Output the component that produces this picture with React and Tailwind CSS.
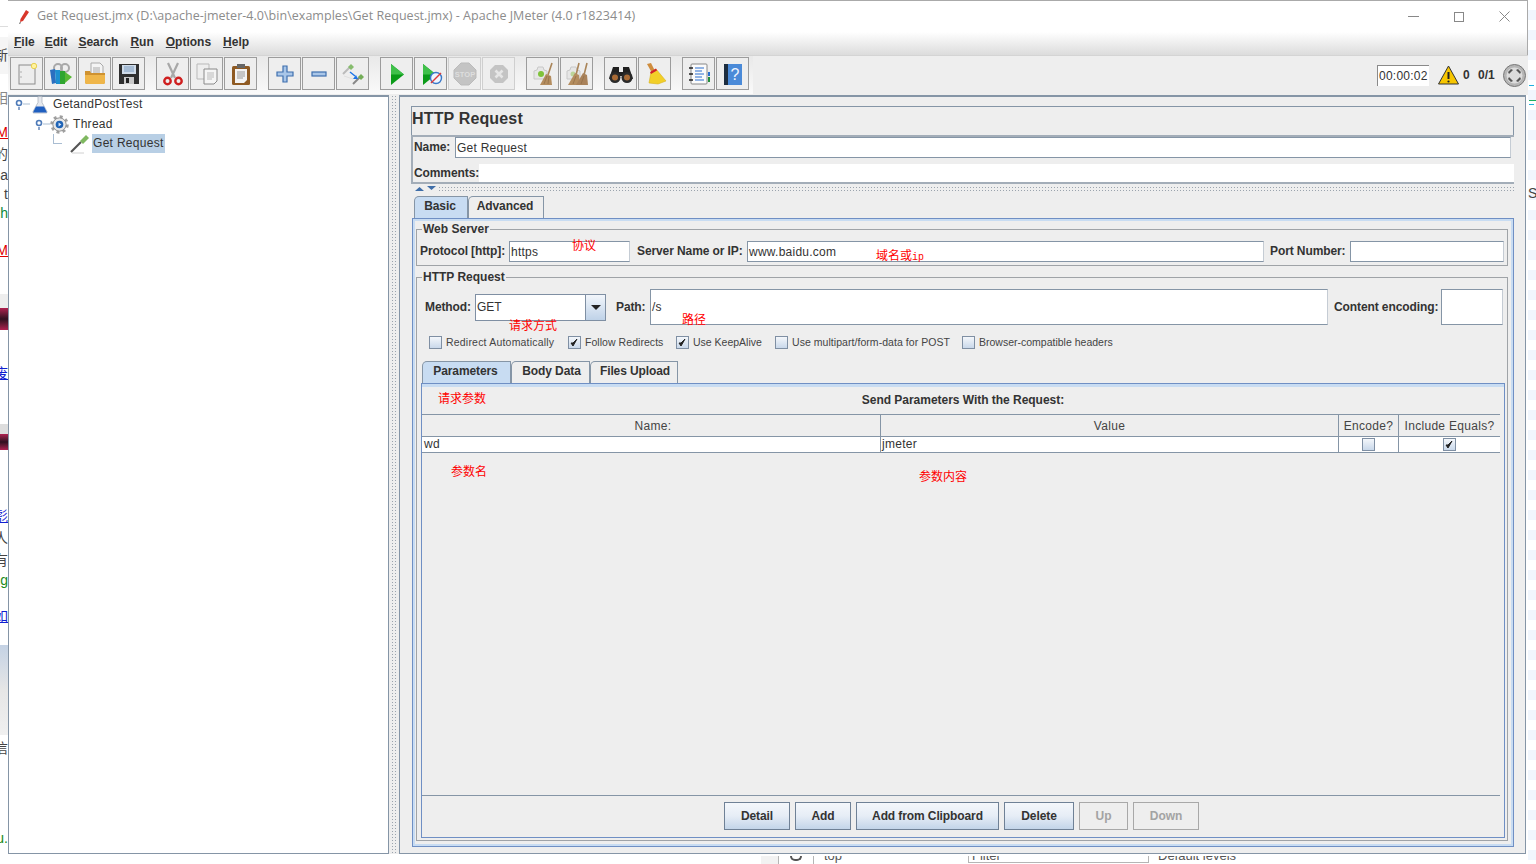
import React from "react";

const LINE = "border-[#8595a6]";

const Sheet = () => (
  <>
    <rect x="4" y="3" width="16" height="19" fill="#ededed" stroke="#8c8c8c" />
    <circle cx="6" cy="10" r=".7" fill="#999" />
    <circle cx="6" cy="15" r=".7" fill="#999" />
    <circle cx="19" cy="4" r="2.700" fill="#fff3a0" stroke="#e8d050" />
  </>
);
const Templates = () => (
  <>
    <circle cx="9" cy="6" r="4" fill="none" stroke="#a8a8a8" strokeWidth="2" />
    <circle cx="16" cy="6" r="4" fill="none" stroke="#a8a8a8" strokeWidth="2" />
    <path d="M1 8l5-1 1 14-4 1z" fill="#2b6fc0" />
    <path d="M6 8h5v14H7z" fill="#1d8fd0" />
    <path d="M11 9h5v13h-5z" fill="#2fa52f" />
    <path d="M16 10l7 5-7 6z" fill="#58b834" />
  </>
);
const Folder = () => (
  <>
    <path d="M8 1h9l3 3v10H8z" fill="#f4f4f4" stroke="#aaa" />
    <path d="M10 6h7M10 8h7M10 10h7" stroke="#aaa" />
    <path d="M2 9h5l1 2h14v9a2 2 0 0 1-2 2H4a2 2 0 0 1-2-2z" fill="#cf9230" />
    <path d="M2 13h20v7a2 2 0 0 1-2 2H4a2 2 0 0 1-2-2z" fill="#efb64a" />
  </>
);
const Floppy = () => (
  <>
    <path d="M2 2h20v20H2z" fill="#2f2f2f" />
    <path d="M5 3h14v9H5z" fill="#cfdbe8" />
    <path d="M7 5h10M7 7h10M7 9h10" stroke="#7d9cc0" />
    <path d="M7 15h10v7H7z" fill="#c9c9c9" />
    <path d="M9 16h3v5H9z" fill="#222" />
  </>
);
const Scissors = () => (
  <>
    <path d="M7 1l7 15M17 1l-7 15" stroke="#a8a8a8" strokeWidth="2.200" />
    <circle cx="6.500" cy="19" r="3.200" fill="none" stroke="#cf1f1f" strokeWidth="2.400" />
    <circle cx="17.500" cy="19" r="3.200" fill="none" stroke="#cf1f1f" strokeWidth="2.400" />
  </>
);
const CopyIcon = () => (
  <>
    <path d="M2 2h12v15H2z" fill="#eee" stroke="#b9b9b9" />
    <path d="M9 7h13v12l-3 3H9z" fill="#f5f5f5" stroke="#8a8a8a" />
    <path d="M12 11h7M12 13h7M12 15h7M12 17h5" stroke="#bbb" />
  </>
);
const Paste = () => (
  <>
    <rect x="3" y="4" width="18" height="19" rx="1.500" fill="#8f5a22" />
    <path d="M6 7h12v11l-3 3H6z" fill="#f3f3f3" />
    <path d="M8 10h8M8 12h8M8 14h8M8 16h6" stroke="#999" />
    <path d="M8 2h8v4H8z" fill="#666" />
  </>
);
const Plus = () => <path d="M10 4h4v6h6v4h-6v6h-4v-6H4v-4h6z" fill="#a9c6e8" stroke="#3e6fae" strokeWidth="1.200" />;
const Minus = () => <rect x="5" y="10" width="14" height="4" fill="#a9c6e8" stroke="#3e6fae" strokeWidth="1.200" />;
const Toggle = () => (
  <>
    <path d="M2 12l7-7" stroke="#bbb" strokeWidth="2" />
    <path d="M7 5l3-3 3 3-3 3z" fill="#86bc6d" />
    <path d="M12 22l7-7" stroke="#888" strokeWidth="2" />
    <path d="M17 15l3-3 3 3-3 3z" fill="#74ad58" />
    <path d="M9 10l5 4" stroke="#1d74e8" strokeWidth="1.500" />
    <path d="M17 17l-5 0 3-4z" fill="#1d74e8" />
    <path d="M3 14l9 3" stroke="#e0e0e0" />
  </>
);
const Play = () => (
  <>
    <path d="M6 2l13 10.500L6 23z" fill="#0a9a18" />
    <path d="M6 2l13 10.500H6z" fill="#3fc04a" />
  </>
);
const PlayNoPause = () => (
  <>
    <path d="M4 2l13 10.500L4 23z" fill="#0a9a18" />
    <path d="M4 2l13 10.500H4z" fill="#3fc04a" />
    <circle cx="17" cy="16" r="5.500" fill="#eef5ff" stroke="#3a78c8" strokeWidth="1.400" />
    <path d="M12 21l10-10" stroke="#dd3a3a" strokeWidth="1.400" />
  </>
);
const Stop = () => (
  <>
    <path d="M8 1h8l7 7v8l-7 7H8l-7-7V8z" fill="#c4c4c4" stroke="#bbb" />
    <text x="12" y="15" textAnchor="middle" fontSize="7.500" fontWeight="700" fill="#dedede" fontFamily="Liberation Sans">STOP</text>
  </>
);
const Shutdown = () => (
  <>
    <path d="M8 3h8l5 5v8l-5 5H8l-5-5V8z" fill="#c4c4c4" />
    <path d="M8.500 8.500l7 7M15.500 8.500l-7 7" stroke="#e6e6e6" strokeWidth="2.600" />
  </>
);
const Clear = () => (
  <>
    <path d="M3 9l3-1 1-3h5l1 3 3 1v8H3z" fill="#e6e6e6" stroke="#c8c8c8" />
    <circle cx="10" cy="12" r="3" fill="#7fc33a" />
    <path d="M21 1l-4 12" stroke="#a98458" strokeWidth="1.600" />
    <path d="M15 12l5 2 1 9H9z" fill="#b48d5f" />
    <path d="M13 22l3-8M17 22l1-8" stroke="#8e6c45" strokeWidth=".7" />
  </>
);
const ClearAll = () => (
  <>
    <path d="M2 9l3-1 1-3h5l1 3 3 1v8H2z" fill="#e6e6e6" stroke="#c8c8c8" />
    <circle cx="8" cy="12" r="2.500" fill="#bcd59a" />
    <path d="M14 1l-3 12M22 1l-3 12" stroke="#a98458" strokeWidth="1.600" />
    <path d="M10 11l4 2 1 10H3z" fill="#b48d5f" />
    <path d="M18 11l4 2 1 10H11z" fill="#a9825a" />
    <path d="M8 22l3-8M16 22l3-8" stroke="#8e6c45" strokeWidth=".7" />
  </>
);
const Binoculars = () => (
  <>
    <path d="M4 5h6v5h4V5h6l4 12H14v-3h-4v3H0z" fill="#1f1f1f" />
    <circle cx="6" cy="15.500" r="5.500" fill="#2a2a2a" />
    <circle cx="18" cy="15.500" r="5.500" fill="#2a2a2a" />
    <circle cx="6" cy="15.500" r="3" fill="#a86a35" />
    <circle cx="18" cy="15.500" r="3" fill="#a86a35" />
  </>
);
const Broom = () => (
  <>
    <path d="M4 2l4-1 4 8-3 2z" fill="#cf8d3e" />
    <path d="M8 10l5-3 10 12-8 3-9-1z" fill="#f2cf28" stroke="#d9b11c" strokeWidth=".6" />
    <path d="M7 10l6-3.500 1 2-6 3.500z" fill="#d0202a" />
  </>
);
const Notebook = () => (
  <>
    <rect x="4" y="2" width="16" height="20" rx="1" fill="#fbfbfb" stroke="#888" />
    <path d="M8 6h9M8 9h7M8 12h9M8 15h7M8 18h9" stroke="#2a6fd0" strokeWidth="1.200" />
    <path d="M2 6h4M2 12h4M2 18h4" stroke="#222" strokeWidth="1.600" />
    <path d="M21 10h2v4h-2z" fill="#2a6fd0" />
    <path d="M21 15h2v5h-2z" fill="#22903a" />
  </>
);
const HelpBook = () => (
  <>
    <path d="M3 2h5v21H3z" fill="#1d2d40" />
    <path d="M7 2h14v21H7z" fill="#4a8ad8" />
    <text x="14" y="18" textAnchor="middle" fontSize="16" fill="#eef4ff" fontFamily="Liberation Sans">?</text>
  </>
);

const toolbar = [
  [[Sheet], [Templates], [Folder], [Floppy]],
  [[Scissors], [CopyIcon], [Paste]],
  [[Plus], [Minus], [Toggle]],
  [[Play], [PlayNoPause], [Stop, true], [Shutdown, true]],
  [[Clear], [ClearAll]],
  [[Binoculars], [Broom]],
  [[Notebook], [HelpBook]],
];

const ToolBtn = ({ Icon, off }) => (
  <div className={`flex h-[33px] w-[33px] items-center justify-center border bg-[#eeeeee] ${off ? "border-[#cfcfcf]" : "border-[#9c9c9c]"}`}>
    <svg width="24" height="24" viewBox="0 0 24 24">
      <Icon />
    </svg>
  </div>
);

const Mnemonic = ({ first, rest, className }) => (
  <span className={className}>
    <span className="underline">{first}</span>
    {rest}
  </span>
);

const Handle = () => (
  <svg width="16" height="12" viewBox="0 0 16 12" className="shrink-0">
    <path d="M9 6h7" stroke="#a9bdd2" />
    <path d="M5 9v3" stroke="#5b7fb5" strokeWidth="1.400" />
    <circle cx="5" cy="5" r="2.500" fill="#fff" stroke="#4f7bb8" strokeWidth="1.600" />
  </svg>
);

const Flask = () => (
  <svg width="16" height="19" viewBox="0 0 16 18" className="shrink-0">
    <path d="M6 1h4v6l5 9a1 1 0 0 1-1 1.500H2A1 1 0 0 1 1 16l5-9z" fill="#e6e9ee" stroke="#a5adb8" strokeWidth=".7" />
    <path d="M4 11h8l3 6H1z" fill="#1f5fc0" />
  </svg>
);

const Gear = () => (
  <svg width="19" height="19" viewBox="0 0 20 20" className="shrink-0">
    <circle cx="10" cy="10" r="8" fill="none" stroke="#a0a0a0" strokeWidth="3.500" strokeDasharray="3 3.280" />
    <circle cx="10" cy="10" r="7" fill="#e8e8e8" stroke="#8d8d8d" />
    <circle cx="10" cy="10" r="4" fill="#1f63b5" />
    <path d="M9 8l3 2-3 2z" fill="#d6e6fa" />
  </svg>
);

const Dropper = () => (
  <svg width="20" height="20" viewBox="0 0 20 20" className="shrink-0">
    <path d="M1 18l10-10" stroke="#555" strokeWidth="2.200" />
    <path d="M10 7l6-6 3 3-6 6z" fill="#7fb860" />
    <path d="M2 19h12" stroke="#d0d0d0" />
  </svg>
);

const Label = ({ className, children }) => <span className={`shrink-0 whitespace-nowrap text-[12px] font-bold leading-[15px] tracking-[-0.1px] text-[#333333] ${className}`}>{children}</span>;

const Field = ({ className, children }) => (
  <div className={`flex items-center overflow-hidden border-y border-l border-y-[#8595a6] border-l-[#8595a6] border-r border-r-[#c5ccd4] bg-white pl-[1px] text-[12px] tracking-[0.25px] text-[#333333] ${className}`}>
    {children}
  </div>
);

const Box = ({ checked }) => (
  <div className="flex h-[13px] w-[13px] shrink-0 items-center justify-center border border-[#7f8fa3] bg-gradient-to-b from-[#f4f7fb] to-[#c9d8ea]">
    {checked && (
      <svg width="9" height="9" viewBox="0 0 9 9">
        <path d="M1 5l2 3 4-7-4 4z" fill="#222" stroke="#222" />
      </svg>
    )}
  </div>
);

const Check = ({ text, checked, className, textClass }) => (
  <div className={`flex items-center gap-[4px] ${className}`}>
    <Box checked={checked} />
    <span className={`whitespace-nowrap text-[10.500px] text-[#444444] ${textClass}`}>{text}</span>
  </div>
);

const Tab = ({ active, className, children }) => (
  <div
    className={`flex items-center justify-center rounded-tl-[5px] border-x border-t border-[#8595a6] text-[12px] font-bold tracking-[-0.1px] text-[#333333] ${
      active ? "bg-[#c8dcf2]" : "bg-[#eeeeee]"
    } ${className}`}
  >
    {children}
  </div>
);

const Fieldset = ({ title, className, children }) => (
  <div className={`relative border border-[#9fa3a7] ${className}`}>
    <span className="absolute left-[5px] top-[-8px] bg-[#eeeeee] px-[1px] text-[12px] font-bold leading-[15px] text-[#333333]">{title}</span>
    {children}
  </div>
);

const Btn = ({ off, className, children }) => (
  <div
    className={`flex h-[28px] items-center justify-center border text-[12px] font-bold tracking-[-0.1px] ${
      off ? "border-[#a8a8a8] bg-[#eeeeee] text-[#a3a3a3]" : "border-[#6f8196] bg-gradient-to-b from-[#f4f7fb] via-[#e6edf6] to-[#c3d5e9] text-[#333333]"
    } ${className}`}
  >
    {children}
  </div>
);

const Note = ({ className, children }) => <span className={`absolute whitespace-nowrap text-[12px] leading-[14px] text-[#ff0000] ${className}`}>{children}</span>;

const Scrap = ({ className, children }) => <span className={`absolute whitespace-nowrap text-[14px] leading-[16px] ${className}`}>{children}</span>;

export default function App() {
  return (
    <div className="relative flex h-[864px] w-[1536px] overflow-hidden bg-white font-['Liberation_Sans','Noto_Sans_CJK_SC',sans-serif]">
      {/* page behind the window, left edge */}
      <div className="relative w-[8px] shrink-0 overflow-hidden">
        <div className="absolute left-0 top-[26px] h-px w-[8px] bg-[#dddddd]" />
        <div className="absolute left-0 top-[37px] h-[37px] w-[8px] bg-[#f5f5f5]" />
        <Scrap className="right-0 top-[47px] text-[#444]">新</Scrap>
        <Scrap className="right-0 top-[90px] text-[#888]">相</Scrap>
        <Scrap className="right-0 top-[124px] text-[#e00000] underline">M</Scrap>
        <Scrap className="right-0 top-[146px] text-[#444]">的</Scrap>
        <Scrap className="right-0 top-[167px] text-[#444]">oa</Scrap>
        <Scrap className="right-0 top-[186px] text-[#444]">t</Scrap>
        <Scrap className="right-0 top-[205px] text-[#0a8a3a]">h</Scrap>
        <Scrap className="right-0 top-[242px] text-[#e00000] underline">M</Scrap>
        <div className="absolute left-0 top-[294px] h-[14px] w-[8px] bg-[#eeeeee]" />
        <div className="absolute left-0 top-[308px] h-[22px] w-[8px] bg-gradient-to-b from-[#b02050] via-[#301020] to-[#b02050]" />
        <Scrap className="right-0 top-[365px] text-[#1020d0] underline">废</Scrap>
        <div className="absolute left-0 top-[424px] h-[10px] w-[8px] bg-[#dddddd]" />
        <div className="absolute left-0 top-[434px] h-[16px] w-[8px] bg-gradient-to-b from-[#b02050] via-[#301020] to-[#b02050]" />
        <Scrap className="right-0 top-[508px] text-[#1020d0] underline">彪</Scrap>
        <Scrap className="right-0 top-[530px] text-[#444]">人</Scrap>
        <Scrap className="right-0 top-[552px] text-[#444]">有</Scrap>
        <Scrap className="right-0 top-[572px] text-[#1a8a1a]">ng</Scrap>
        <Scrap className="right-0 top-[608px] text-[#1020d0] underline">如</Scrap>
        <div className="absolute left-0 top-[645px] h-[90px] w-[8px] bg-gradient-to-b from-[#c4d2e4] via-[#e6e6e6] to-[#f0f0f0]" />
        <Scrap className="right-0 top-[740px] text-[#444]">信</Scrap>
        <Scrap className="right-0 top-[830px] text-[#1a8a1a]">u.</Scrap>
      </div>

      {/* JMeter window */}
      <div className="flex w-[1520px] shrink-0 flex-col">
        <div className="flex h-[32px] shrink-0 items-center border-t border-t-[#aaaaaa] border-r border-r-[#aaaaaa] bg-white pl-[10px]">
          <svg width="12" height="16" viewBox="0 0 12 16" className="mr-[7px]">
            <path d="M8 1l3 2-6 9-3 1 .5-3z" fill="#d8362a" />
            <path d="M1 14l2-1-1 2z" fill="#333" />
          </svg>
          <span className="text-[12.500px] tracking-[0.03px] text-[#8c8c8c] font-['Open_Sans',sans-serif]">Get Request.jmx (D:\apache-jmeter-4.0\bin\examples\Get Request.jmx) - Apache JMeter (4.0 r1823414)</span>
          <div className="ml-auto flex items-center pr-[17px]">
            <div className="mr-[35px] h-px w-[11px] bg-[#888888]" />
            <div className="mr-[35px] h-[10px] w-[10px] border border-[#888888]" />
            <svg width="11" height="11" viewBox="0 0 11 11">
              <path d="M.5.5l10 10M10.500.5l-10 10" stroke="#888888" />
            </svg>
          </div>
        </div>

        <div className="flex h-[23px] shrink-0 items-center gap-[12px] border-r border-[#aaaaaa] bg-gradient-to-b from-white to-[#dcdcdc] pb-[3px] pl-[6px] text-[12px] font-bold text-[#333333]">
          <Mnemonic first="F" rest="ile" className="mr-[-2px]" />
          <Mnemonic first="E" rest="dit" className="mr-[-1px]" />
          <Mnemonic first="S" rest="earch" />
          <Mnemonic first="R" rest="un" />
          <Mnemonic first="O" rest="ptions" />
          <Mnemonic first="H" rest="elp" />
        </div>

        <div className="flex h-[40px] shrink-0 items-stretch border-t border-[#d4d4d4] bg-[#eeeeee]">
          <div className="flex h-[38px] w-[745px] items-start gap-[11px] bg-gradient-to-b from-[#e9e9e9] to-[#fafafa] pl-[2px] pt-[1px]">
            {toolbar.map((group, i) => (
              <div key={i} className="flex gap-[1px]">
                {group.map(([Icon, off], j) => (
                  <ToolBtn key={j} Icon={Icon} off={off} />
                ))}
              </div>
            ))}
          </div>
          <div className="ml-auto flex h-[38px] items-center pr-[2px] text-[12px] font-bold text-[#333333]">
            <div className="mr-[9px] flex h-[21px] w-[52px] items-center border-l border-t border-[#8a8a8a] bg-white pl-[1px] font-normal tracking-[0.25px]">00:00:02</div>
            <svg width="21" height="20" viewBox="0 0 21 20" className="mr-[4px]">
              <path d="M10.500 1l10 18H.500z" fill="#f7c600" stroke="#333" />
              <path d="M10.500 7v7" stroke="#222" strokeWidth="2" />
              <circle cx="10.500" cy="16.500" r="1.100" fill="#222" />
            </svg>
            <span className="mr-[9px] w-[6px]">0</span>
            <span className="mr-[9px] w-[16px]">0/1</span>
            <svg width="23" height="23" viewBox="0 0 23 23">
              <circle cx="11.500" cy="11.500" r="11" fill="#b5b5b5" stroke="#777" />
              <circle cx="11.500" cy="11.500" r="8" fill="#dcdcdc" />
              <path d="M5 8l3-3 2 1-4 4zM18 8l-3-3-2 1 4 4zM5 15l3 3 2-1-4-4zM18 15l-3 3-2-1 4-4z" fill="#555" />
            </svg>
          </div>
        </div>

        <div className="flex h-[759px] shrink-0">
          {/* test plan tree */}
          <div className={`flex w-[381px] shrink-0 flex-col border-x border-b border-t-2 ${LINE} bg-white pl-[5px] text-[12px] tracking-[0.3px] text-[#333333]`}>
            <div className="mt-[-3px] flex h-[20px] items-center">
              <Handle />
              <span className="ml-[2px]"><Flask /></span>
              <span className="ml-[5px]">GetandPostTest</span>
            </div>
            <div className="flex h-[20px] items-center pl-[20px]">
              <Handle />
              <Gear />
              <span className="ml-[4px]">Thread</span>
            </div>
            <div className="flex h-[19px] items-center pl-[39px]">
              <div className="mb-[10px] h-[10px] w-[9px] shrink-0 border-b border-l border-[#a9bdd2]" />
              <span className="ml-[8px]"><Dropper /></span>
              <span className="ml-[2px] bg-[#b8cfe5] px-[1px] leading-[19px]">Get Request</span>
            </div>
          </div>

          {/* splitter */}
          <div className="flex w-[10px] shrink-0 justify-center bg-[#eeeeee]">
            <div className="h-full w-[6px] bg-[radial-gradient(#9aa3ad_0.7px,transparent_0.8px)] bg-[length:3px_3px]" />
          </div>

          {/* element editor */}
          <div className={`flex w-[1127px] shrink-0 flex-col border-x border-b border-t-2 ${LINE} bg-[#eeeeee] pl-[11px] pr-[11px] pt-[9px]`}>
            <div className={`flex h-[29px] shrink-0 items-center border-x border-t ${LINE} pb-[4px] text-[16px] font-bold leading-[20px] tracking-[0.15px] text-[#333333]`}>HTTP Request</div>
            <div className="flex h-[49px] shrink-0 flex-col border-2 border-[#a3adb8] border-r-0 pl-[1px]">
              <div className="flex h-[21px] items-center gap-[4px]">
                <Label className="w-[37px]">Name:</Label>
                <Field className="h-[21px] w-[1056px]">Get Request</Field>
              </div>
              <div className="mt-[6px] flex h-[18px] items-center">
                <Label className="w-[65px]">Comments:</Label>
                <div className="h-[18px] flex-1 bg-white" />
              </div>
            </div>
            <div className="flex h-[9px] shrink-0 items-center gap-[2px] pl-[4px]">
              <svg width="21" height="5" viewBox="0 0 21 5" className="shrink-0">
                <path d="M0 5l4.500-4L9 5z" fill="#3f6ea8" />
                <path d="M12 0h9l-4.500 4z" fill="#3f6ea8" />
              </svg>
              <div className="h-[6px] flex-1 bg-[radial-gradient(#9aa3ad_0.7px,transparent_0.8px)] bg-[length:3px_3px]" />
            </div>

            <div className="mt-[3px] flex h-[22px] shrink-0 items-stretch pl-[3px]">
              <Tab active className="w-[54px] pb-[4px] pr-[2px]">Basic</Tab>
              <Tab className="w-[76px] pb-[4px] pr-[2px]">Advanced</Tab>
            </div>

            <div className="ml-[1px] flex h-[629px] shrink-0 flex-col border-[3px] border-[#c8dcf2] pl-[1px] pr-[3px] outline outline-[#6f8fc4] outline-offset-[-1px]">
              <Fieldset title="Web Server" className="mt-[8px] flex h-[37px] shrink-0 items-center gap-[4px] pb-[3px] pl-[3px] pt-[11px]">
                <Label className="w-[85px]">Protocol [http]:</Label>
                <Field className="h-[21px] w-[121px]">https</Field>
                <Label className="ml-[3px] w-[106px]">Server Name or IP:</Label>
                <Field className="h-[21px] w-[517px]">www.baidu.com</Field>
                <Label className="ml-[2px] w-[76px]">Port Number:</Label>
                <Field className="h-[21px] w-[154px]" />
              </Fieldset>

              <Fieldset title="HTTP Request" className="mt-[11px] flex h-[564px] shrink-0 flex-col pt-[11px]">
                <div className="flex h-[36px] shrink-0 items-center gap-[4px] pl-[8px]">
                  <Label className="w-[46px]">Method:</Label>
                  <div className="flex h-[27px] w-[131px] shrink-0 border border-[#7f8fa3] bg-white">
                    <div className="flex-1 border-r border-[#7f8fa3] pl-[1px] text-[12px] leading-[25px] text-[#333333]">GET</div>
                    <div className="flex w-[19px] items-center justify-center bg-gradient-to-b from-[#f2f6fb] to-[#bfd2e8]">
                      <svg width="10" height="5" viewBox="0 0 10 5">
                        <path d="M0 0h10L5 5z" fill="#222" />
                      </svg>
                    </div>
                  </div>
                  <Label className="ml-[6px] w-[30px]">Path:</Label>
                  <Field className="h-[36px] w-[678px]">/s</Field>
                  <Label className="ml-[2px] w-[103px]">Content encoding:</Label>
                  <Field className="h-[36px] w-[62px]" />
                </div>

                <div className="mt-[11px] flex h-[13px] shrink-0 pl-[12px]">
                  <Check text="Redirect Automatically" className="w-[139px]" textClass="tracking-[0.2px]" />
                  <Check text="Follow Redirects" checked className="w-[108px]" textClass="tracking-[0.05px]" />
                  <Check text="Use KeepAlive" checked className="w-[99px]" />
                  <Check text="Use multipart/form-data for POST" className="w-[187px]" textClass="tracking-[0.05px]" />
                  <Check text="Browser-compatible headers" />
                </div>

                <div className="mt-[12px] flex h-[22px] shrink-0 items-stretch pl-[5px]">
                  <Tab active className="w-[89px] pb-[3px] pr-[2px]">Parameters</Tab>
                  <Tab className="w-[79px] pb-[3px] pl-[2px]">Body Data</Tab>
                  <Tab className="w-[88px] pb-[3px] pl-[2px]">Files Upload</Tab>
                </div>

                <div className="ml-[4px] flex h-[455px] w-[1084px] shrink-0 flex-col border border-[#6f8fc4]">
                  <div className="flex h-[30px] shrink-0 items-center justify-center border-t-[3px] border-[#c8dcf2] pb-[2px] text-[12px] font-bold tracking-[-0.03px] text-[#333333]">Send Parameters With the Request:</div>
                  <div className={`flex h-[382px] w-[1078px] shrink-0 flex-col border-y ${LINE}`}>
                    <div className="grid h-[21px] shrink-0 grid-cols-[459px_458px_60px_101px] text-[12px] tracking-[0.3px] text-[#444444]">
                      <div className="flex items-center justify-center border-r border-[#8595a6] pl-[4px]">Name:</div>
                      <div className="flex items-center justify-center border-r border-[#8595a6]">Value</div>
                      <div className="flex items-center justify-center border-r border-[#8595a6]">Encode?</div>
                      <div className="flex items-center justify-center">Include Equals?</div>
                    </div>
                    <div className={`grid h-[17px] shrink-0 grid-cols-[459px_458px_60px_101px] grid-rows-[15px] border-y ${LINE} bg-white text-[12px] leading-[15px] tracking-[0.3px] text-[#333333]`}>
                      <div className="flex items-center border-r border-[#8595a6] pl-[2px]">wd</div>
                      <div className="flex items-center border-r border-[#8595a6] pl-[1px]">jmeter</div>
                      <div className="flex items-center justify-center border-r border-[#8595a6]"><Box /></div>
                      <div className="flex items-center justify-center"><Box checked /></div>
                    </div>
                  </div>
                  <div className="mt-[6px] flex shrink-0 gap-[5px] pl-[302px]">
                    <Btn className="w-[66px]">Detail</Btn>
                    <Btn className="w-[56px]">Add</Btn>
                    <Btn className="w-[143px]">Add from Clipboard</Btn>
                    <Btn className="w-[70px]">Delete</Btn>
                    <Btn off className="w-[49px]">Up</Btn>
                    <Btn off className="w-[66px]">Down</Btn>
                  </div>
                </div>
              </Fieldset>
            </div>
          </div>
        </div>

        {/* page behind the window, bottom edge */}
        <div className="mt-[2px] flex h-[8px] shrink-0 overflow-hidden text-[13px] leading-[0px] text-[#555555]">
          <div className="ml-[753px] h-full w-[17px] bg-[#f2f2f2]" />
          <div className="flex h-full w-[35px] justify-center border-l border-[#b5b5b5]">
            <div className="h-[5px] w-[12px] rounded-b-full border-x-2 border-b-2 border-[#555555]" />
          </div>
          <div className="h-full w-[147px] border-l border-[#b5b5b5] pl-[10px]">top</div>
          <div className="ml-[8px] h-[7px] w-[181px] border-x border-b border-[#b5b5b5] pl-[3px]">Filter</div>
          <div className="ml-[9px]">Default levels</div>
        </div>
      </div>

      {/* page behind the window, right edge */}
      <div className="relative w-[8px] shrink-0 overflow-hidden bg-[repeating-linear-gradient(#ffffff_0px,#ffffff_10px,#f1f6fd_10px,#f1f6fd_20px)]">
        <Scrap className="left-0 top-[185px] text-[#444]">S</Scrap>
        <div className="absolute left-[1px] top-[85px] h-px w-[5px] bg-[#20b0e0]" />
        <div className="absolute left-[1px] top-[100px] h-px w-[7px] bg-[#20b060]" />
        <div className="absolute left-[1px] top-[104px] h-px w-[5px] bg-[#20b0e0]" />
      </div>

      {/* annotations pasted over the window */}
      <Note className="left-[572px] top-[239px]">协议</Note>
      <Note className="left-[876px] top-[249px]">域名或<span className="font-['Liberation_Mono',monospace] text-[10px]">ip</span></Note>
      <Note className="left-[509px] top-[319px]">请求方式</Note>
      <Note className="left-[682px] top-[313px]">路径</Note>
      <Note className="left-[438px] top-[392px]">请求参数</Note>
      <Note className="left-[451px] top-[465px]">参数名</Note>
      <Note className="left-[919px] top-[470px]">参数内容</Note>
    </div>
  );
}
